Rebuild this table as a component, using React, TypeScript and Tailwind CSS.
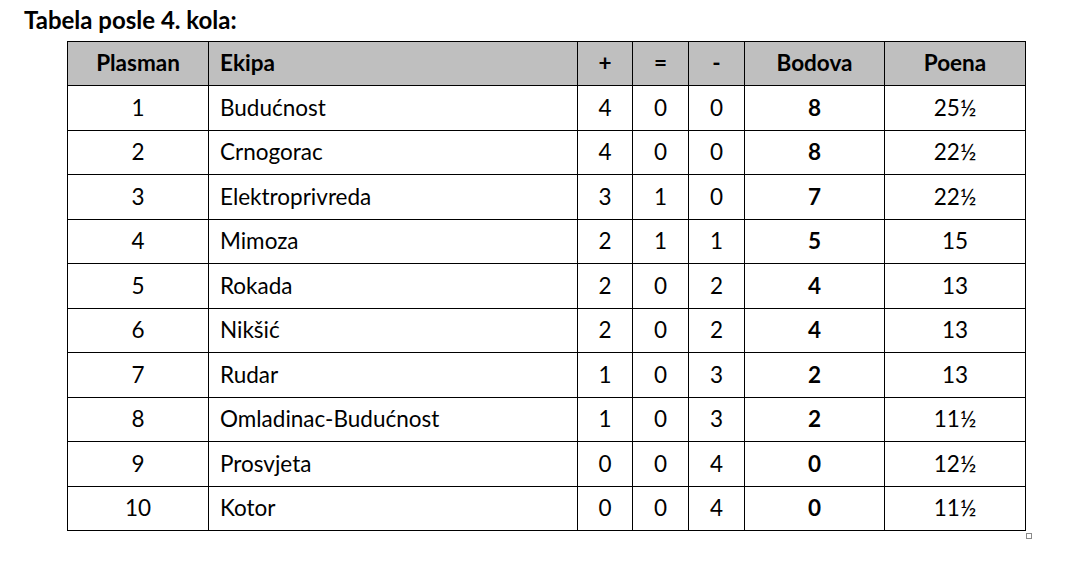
const rows = [
  { rank: 1, team: "Budućnost", w: 4, d: 0, l: 0, pts: 8, score: "25½" },
  { rank: 2, team: "Crnogorac", w: 4, d: 0, l: 0, pts: 8, score: "22½" },
  { rank: 3, team: "Elektroprivreda", w: 3, d: 1, l: 0, pts: 7, score: "22½" },
  { rank: 4, team: "Mimoza", w: 2, d: 1, l: 1, pts: 5, score: "15" },
  { rank: 5, team: "Rokada", w: 2, d: 0, l: 2, pts: 4, score: "13" },
  { rank: 6, team: "Nikšić", w: 2, d: 0, l: 2, pts: 4, score: "13" },
  { rank: 7, team: "Rudar", w: 1, d: 0, l: 3, pts: 2, score: "13" },
  { rank: 8, team: "Omladinac-Budućnost", w: 1, d: 0, l: 3, pts: 2, score: "11½" },
  { rank: 9, team: "Prosvjeta", w: 0, d: 0, l: 4, pts: 0, score: "12½" },
  { rank: 10, team: "Kotor", w: 0, d: 0, l: 4, pts: 0, score: "11½" },
];

const cell = "border border-black p-0 text-center align-middle";

export default function App() {
  return (
    <div className="h-[570px] w-[1073px] bg-white text-black font-['Lato','Open_Sans',sans-serif]">
      <h1 className="pl-6 pt-[5px] text-[24px] font-bold leading-[30px]">Tabela posle 4. kola:</h1>

      <div className="relative ml-[67px] mt-[6px] w-[959px]">
        <table className="w-[959px] table-fixed border-collapse text-[22.5px] leading-none">
          <colgroup>
            <col className="w-[141px]" />
            <col className="w-[369px]" />
            <col className="w-[55px]" />
            <col className="w-[56px]" />
            <col className="w-[56px]" />
            <col className="w-[140px]" />
            <col className="w-[141px]" />
          </colgroup>
          <thead>
            <tr className="h-[44px] bg-[#bfbfbf] font-bold">
              <th className={cell}>Plasman</th>
              <th className="border border-black p-0 pl-[11px] text-left align-middle">Ekipa</th>
              <th className={cell}>+</th>
              <th className={cell}>=</th>
              <th className={cell}>-</th>
              <th className={cell}>Bodova</th>
              <th className={cell}>Poena</th>
            </tr>
          </thead>
          <tbody>
            {rows.map((r) => (
              <tr key={r.rank} className="h-[44.5px]">
                <td className={cell}>{r.rank}</td>
                <td className="border border-black p-0 pl-[11px] text-left align-middle">{r.team}</td>
                <td className={cell}>{r.w}</td>
                <td className={cell}>{r.d}</td>
                <td className={cell}>{r.l}</td>
                <td className={`${cell} font-bold`}>{r.pts}</td>
                <td className={cell}>{r.score}</td>
              </tr>
            ))}
          </tbody>
        </table>
        {/* resize handle */}
        <div className="absolute -right-[6px] -bottom-[8px] h-[6px] w-[6px] border border-[#8a8a8a] bg-white" />
      </div>
    </div>
  );
}
